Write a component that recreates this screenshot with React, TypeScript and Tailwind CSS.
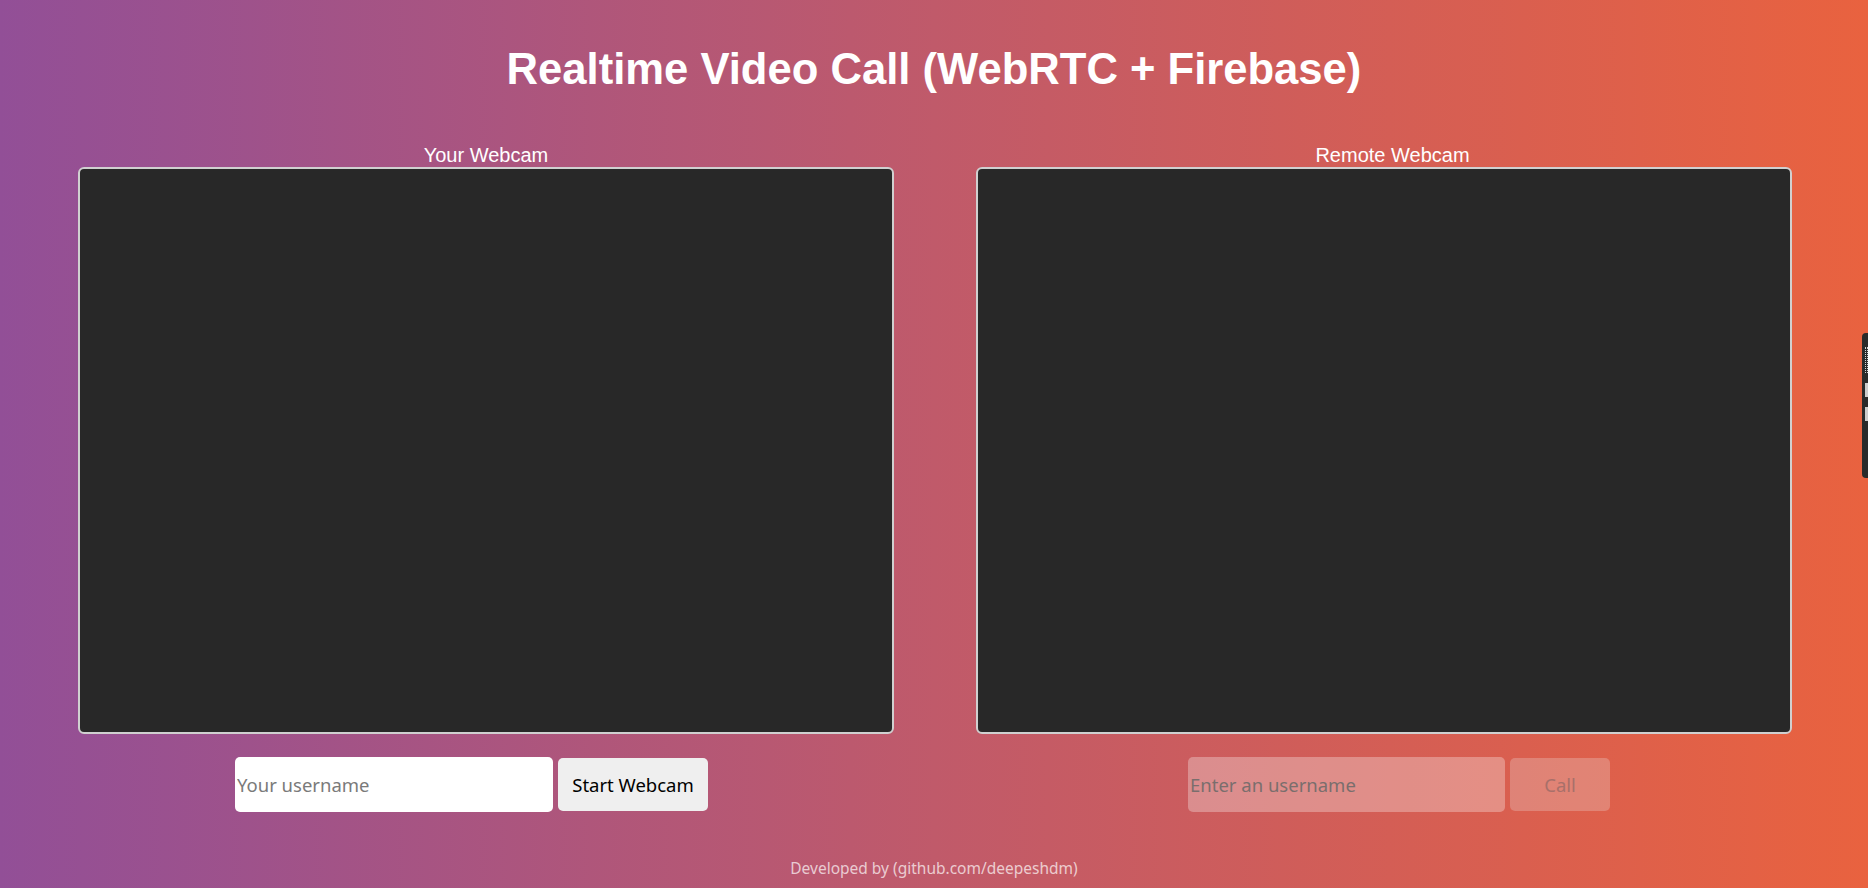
import React from 'react';

const VideoPanel: React.FC<{ label: string; labelClass?: string }> = ({ label, labelClass }) => (
  <div className="flex flex-col items-center">
    <span className={`text-[20px] leading-[23px] text-white ${labelClass ?? ''}`}>{label}</span>
    <div className="w-[816px] h-[567px] bg-[#282828] border-2 border-[#d0d0d0] rounded-[6px]" />
  </div>
);

const App: React.FC = () => {
  return (
    <div className="relative min-h-screen w-full overflow-hidden bg-[linear-gradient(90deg,#924f97_0%,#c05a6a_50%,#e9623f_100%)] font-['Liberation_Sans',Arial,sans-serif]">
      {/* Title */}
      <h1 className="pt-[44px] text-center text-[43.6px] leading-[50px] font-bold text-white">
        Realtime Video Call (WebRTC + Firebase)
      </h1>

      {/* Webcams */}
      <div className="mt-[50px] flex justify-center gap-[82px] pl-[2px]">
        <VideoPanel label="Your Webcam" />
        <VideoPanel label="Remote Webcam" labelClass="pl-[17px]" />
      </div>

      {/* Controls */}
      <div className="mt-[23px] grid grid-cols-2 font-['Noto_Sans','Open_Sans',sans-serif] text-[18.5px]">
        <div className="flex items-center justify-center gap-[5px] pl-[9px]">
          <input
            className="w-[318px] h-[55px] rounded-[5px] bg-white px-[2px] text-black placeholder:text-[#7a7a7a] outline-none"
            placeholder="Your username"
          />
          <button className="w-[150px] h-[53px] rounded-[5px] bg-[#efefef] text-black">
            Start Webcam
          </button>
        </div>
        <div className="flex items-center justify-center gap-[5px] pr-[4px]">
          <input
            disabled
            className="w-[317px] h-[55px] rounded-[5px] bg-white/30 px-[2px] placeholder:text-[#7a6e6d] outline-none"
            placeholder="Enter an username"
          />
          <button disabled className="w-[100px] h-[53px] rounded-[5px] bg-[#efefef]/25 text-[#a8706a]">
            Call
          </button>
        </div>
      </div>

      {/* Footer */}
      <p className="mt-[46px] pb-[8px] text-center font-['Noto_Sans','Open_Sans',sans-serif] text-[15.5px] leading-[20px] text-white/70">
        Developed by (github.com/deepeshdm)
      </p>

      {/* Extension tab on right edge */}
      <div className="absolute right-0 top-[333px] w-[6px] h-[145px] rounded-l-[4px] bg-[#2a2a2a] flex flex-col items-end gap-[10px] pt-[14px]">
        <div className="w-[3px] h-[26px] border border-dotted border-white/80" />
        <div className="w-[3px] h-[14px] bg-[#cccccc]" />
        <div className="w-[3px] h-[14px] bg-[#cccccc]" />
      </div>
    </div>
  );
};

export default App;
